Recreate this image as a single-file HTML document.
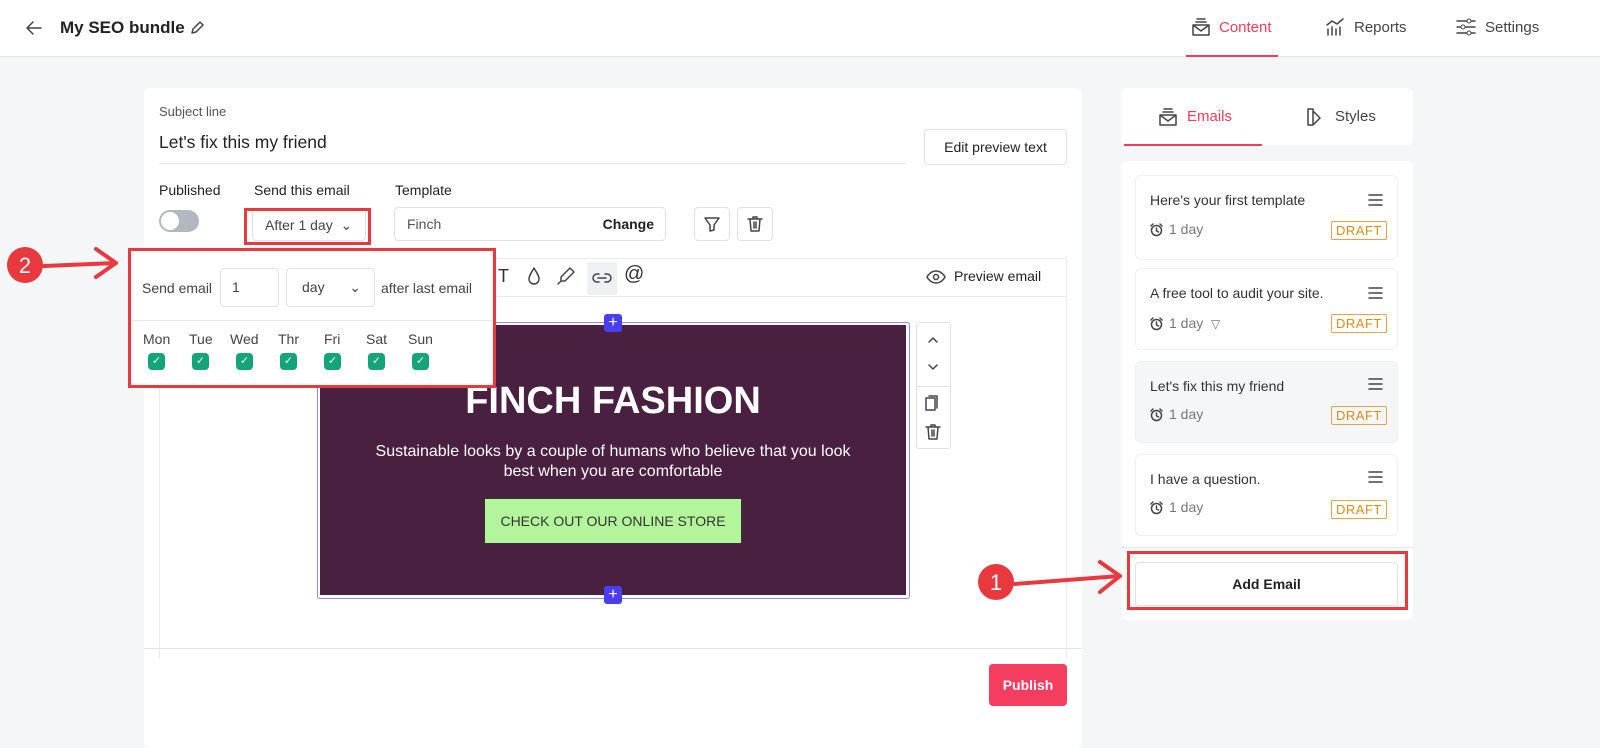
<!DOCTYPE html>
<html><head><meta charset="utf-8"><style>
*{box-sizing:border-box;margin:0;padding:0}
body{width:1600px;height:735px;overflow:hidden;background:#f5f6f8;font-family:"Liberation Sans",sans-serif;color:#222;position:relative}
.a{position:absolute}
.hdr{left:0;top:0;width:1600px;height:57px;background:#fff;border-bottom:1px solid #e3e5ea}
.btn{background:#fff;border:1px solid #dfe2e7;border-radius:4px}
.ic{stroke:#444;fill:none;stroke-width:1.5;stroke-linecap:round;stroke-linejoin:round}
.card{background:#fff;border:1px solid #eef0f3;border-radius:6px}
.draft{border:1px solid #e0a44a;color:#d48f1a;font-size:13px;padding:1px 4px;border-radius:2px;letter-spacing:.5px}
.chk{width:17px;height:17px;background:#13a47a;border-radius:4px;color:#fff;font-size:11px;text-align:center;line-height:17px}
.day{font-size:14px;color:#777;padding-left:19px}
.al{position:absolute;left:0;top:2px}
</style></head><body>
<div class="a hdr"></div>
<svg class="a" style="left:24px;top:19px" width="20" height="18"><path class="ic" stroke="#333" d="M17 9H3M9 3L3 9l6 6"/></svg>
<div class="a" style="left:60px;top:18px;font-size:17px;font-weight:bold;color:#222">My SEO bundle</div>
<svg class="a" style="left:189px;top:20px" width="16" height="16"><path class="ic" stroke="#999" d="M3 13l1-4 7-7 3 3-7 7z"/></svg>
<svg class="a" style="left:1191px;top:17px" width="20" height="20"><path class="ic" stroke="#f03d5c" d="M2 8h16v10H2zM2 8l8 6 8-6M5 5h10M6 2h8"/></svg>
<div class="a" style="left:1219px;top:19px;font-size:15px;color:#f03d5c">Content</div>
<div class="a" style="left:1186px;top:55px;width:92px;height:2px;background:#f03d5c"></div>
<svg class="a" style="left:1325px;top:17px" width="20" height="20"><path class="ic" d="M2 8l5-4 5 3 6-5M3 12v6M7 10v8M11 12v6M15 10v8"/></svg>
<div class="a" style="left:1354px;top:19px;font-size:15px;color:#444">Reports</div>
<svg class="a" style="left:1456px;top:17px" width="20" height="20"><path class="ic" d="M1 4h18M1 10h18M1 16h18"/><circle cx="13" cy="4" r="2" fill="#fff" stroke="#444"/><circle cx="7" cy="10" r="2" fill="#fff" stroke="#444"/><circle cx="13" cy="16" r="2" fill="#fff" stroke="#444"/></svg>
<div class="a" style="left:1485px;top:19px;font-size:15px;color:#444">Settings</div>

<div class="a" style="left:144px;top:88px;width:938px;height:660px;background:#fff;border-radius:6px"></div>
<div class="a" style="left:159px;top:104px;font-size:13px;color:#555">Subject line</div>
<div class="a" style="left:159px;top:132px;font-size:17.5px;color:#222">Let's fix this my friend</div>
<div class="a" style="left:159px;top:163px;width:747px;height:1px;background:#e3e5ea"></div>
<div class="a btn" style="left:924px;top:129px;width:143px;height:36px;font-size:14px;text-align:center;line-height:34px">Edit preview text</div>
<div class="a" style="left:159px;top:182px;font-size:14px">Published</div>
<div class="a" style="left:254px;top:182px;font-size:14px">Send this email</div>
<div class="a" style="left:395px;top:182px;font-size:14px">Template</div>
<div class="a" style="left:159px;top:210px;width:40px;height:22px;border-radius:11px;background:#b3b8c0"></div>
<div class="a" style="left:161px;top:212px;width:18px;height:18px;border-radius:9px;background:#fff"></div>
<div class="a btn" style="left:252px;top:209px;width:114px;height:32px;font-size:14px;line-height:30px;padding-left:12px;color:#444">After 1 day &nbsp;⌄</div>
<div class="a" style="left:244px;top:208px;width:127px;height:37px;border:3px solid #e8393e"></div>
<div class="a btn" style="left:394px;top:207px;width:272px;height:34px;font-size:14px;line-height:32px;padding-left:12px;color:#555">Finch<span style="position:absolute;right:11px;color:#222;font-weight:bold">Change</span></div>
<div class="a btn" style="left:694px;top:207px;width:36px;height:34px"></div>
<svg class="a" style="left:703px;top:215px" width="18" height="18"><path class="ic" d="M2 3h14l-5 7v5l-4 1v-6z"/></svg>
<div class="a btn" style="left:737px;top:207px;width:36px;height:34px"></div>
<svg class="a" style="left:746px;top:215px" width="18" height="18"><path class="ic" d="M2 4h14M7 4V2h4v2M4 4l1 12h8l1-12M8 7v6M10 7v6"/></svg>

<div class="a" style="left:159px;top:258px;width:908px;height:400px;border:1px solid #e8eaee;border-bottom:none"></div>
<div class="a" style="left:159px;top:296px;width:908px;height:1px;background:#e8eaee"></div>
<div class="a" style="left:498px;top:266px;font-size:18px;color:#333">T</div>
<svg class="a" style="left:525px;top:266px" width="18" height="20"><path class="ic" d="M9 2C6 7 4 10 4 13a5 5 0 0010 0c0-3-2-6-5-11z"/></svg>
<svg class="a" style="left:556px;top:266px" width="20" height="20"><path class="ic" d="M14 2l4 4-9 9-4 0 0-4zM5 15l-3 3"/></svg>
<div class="a" style="left:587px;top:262px;width:30px;height:33px;background:#eef0f3"></div>
<svg class="a" style="left:592px;top:268px" width="20" height="20"><path class="ic" d="M7 6H5a4 4 0 000 8h2M13 6h2a4 4 0 010 8h-2M6 10h8"/></svg>
<div class="a" style="left:624px;top:263px;font-size:20px;color:#333">@</div>
<svg class="a" style="left:926px;top:268px" width="20" height="18"><path class="ic" d="M1 9s3-6 9-6 9 6 9 6-3 6-9 6-9-6-9-6z"/><circle cx="10" cy="9" r="2.5" class="ic"/></svg>
<div class="a" style="left:954px;top:268px;font-size:14px;color:#222">Preview email</div>

<div class="a" style="left:317px;top:322px;width:593px;height:277px;border:1.5px solid #8f8af0;border-radius:3px"></div>
<div class="a" style="left:320px;top:325px;width:586px;height:270px;background:#4a2040"></div>
<div class="a" style="left:320px;top:380px;width:586px;text-align:center;color:#fff;font-size:38px;font-weight:bold">FINCH FASHION</div>
<div class="a" style="left:360px;top:442px;width:506px;text-align:center;color:#fff;font-size:16px;line-height:20px">Sustainable looks by a couple of humans who believe that you look best when you are comfortable</div>
<div class="a" style="left:484px;top:498px;width:258px;height:46px;background:#b3f59a;border:1px solid #333;text-align:center;line-height:44px;font-size:14px;color:#333">CHECK OUT OUR ONLINE STORE</div>
<div class="a" style="left:604px;top:314px;width:18px;height:18px;background:#4a3ff0;border-radius:3px;color:#fff;text-align:center;line-height:17px;font-size:16px">+</div>
<div class="a" style="left:604px;top:586px;width:18px;height:18px;background:#4a3ff0;border-radius:3px;color:#fff;text-align:center;line-height:17px;font-size:16px">+</div>
<div class="a" style="left:916px;top:322px;width:35px;height:127px;background:#fff;border:1px solid #dfe2e7;border-radius:3px"></div>
<div class="a" style="left:916px;top:386px;width:35px;height:1px;background:#dfe2e7"></div>
<svg class="a" style="left:926px;top:333px" width="14" height="60"><path class="ic" stroke="#bbb" d="M3 9l4-4 4 4"/><path class="ic" d="M3 32l4 4 4-4"/></svg>
<svg class="a" style="left:924px;top:392px" width="20" height="52"><path class="ic" d="M5 4h8v12M2 6h9v12H2z"/><path class="ic" d="M2 35h14M7 35v-2h4v2M4 35l1 12h8l1-12M8 38v6M10 38v6"/></svg>
<div class="a" style="left:144px;top:648px;width:938px;height:1px;background:#e3e5ea"></div>
<div class="a" style="left:989px;top:664px;width:78px;height:42px;background:#f53d5f;border-radius:4px;color:#fff;text-align:center;line-height:42px;font-size:14px;font-weight:bold">Publish</div>

<!-- popup -->
<div class="a" style="left:128px;top:248px;width:368px;height:140px;background:#fff;border:3px solid #e8393e"></div>
<div class="a" style="left:131px;top:320px;width:362px;height:1px;background:#e8eaee"></div>
<div class="a" style="left:142px;top:280px;font-size:14px;color:#444">Send email</div>
<div class="a btn" style="left:220px;top:268px;width:59px;height:39px;font-size:14px;line-height:37px;padding-left:11px;color:#444">1</div>
<div class="a btn" style="left:286px;top:268px;width:89px;height:39px;font-size:14px;line-height:37px;padding-left:15px;color:#444">day<span style="position:absolute;right:13px">⌄</span></div>
<div class="a" style="left:381px;top:280px;font-size:14px;color:#444">after last email</div>
<div class="a" style="left:143px;top:331px;font-size:14px;color:#444">Mon</div>
<div class="a" style="left:189px;top:331px;font-size:14px;color:#444">Tue</div>
<div class="a" style="left:230px;top:331px;font-size:14px;color:#444">Wed</div>
<div class="a" style="left:278px;top:331px;font-size:14px;color:#444">Thr</div>
<div class="a" style="left:324px;top:331px;font-size:14px;color:#444">Fri</div>
<div class="a" style="left:366px;top:331px;font-size:14px;color:#444">Sat</div>
<div class="a" style="left:408px;top:331px;font-size:14px;color:#444">Sun</div>
<div class="a chk" style="left:148px;top:353px">✓</div>
<div class="a chk" style="left:192px;top:353px">✓</div>
<div class="a chk" style="left:236px;top:353px">✓</div>
<div class="a chk" style="left:280px;top:353px">✓</div>
<div class="a chk" style="left:324px;top:353px">✓</div>
<div class="a chk" style="left:368px;top:353px">✓</div>
<div class="a chk" style="left:412px;top:353px">✓</div>

<!-- right panel -->
<div class="a" style="left:1121px;top:88px;width:292px;height:57px;background:#fff;border-radius:6px"></div>
<svg class="a" style="left:1158px;top:107px" width="20" height="20"><path class="ic" stroke="#f03d5c" d="M2 8h16v10H2zM2 8l8 6 8-6M5 5h10M6 2h8"/></svg>
<div class="a" style="left:1187px;top:108px;font-size:15px;color:#f03d5c">Emails</div>
<div class="a" style="left:1124px;top:144px;width:138px;height:2px;background:#f03d5c"></div>
<svg class="a" style="left:1306px;top:107px" width="22" height="20"><path class="ic" d="M2 2h5v16H2zM7 4l7 7-7 7"/></svg>
<div class="a" style="left:1335px;top:108px;font-size:15px;color:#444">Styles</div>
<div class="a" style="left:1121px;top:161px;width:292px;height:459px;background:#fff;border-radius:6px"></div>

<div class="a card" style="left:1135px;top:175px;width:263px;height:85px"></div>
<div class="a card" style="left:1135px;top:268px;width:263px;height:82px"></div>
<div class="a card" style="left:1135px;top:361px;width:263px;height:82px;background:#f5f6f8"></div>
<div class="a card" style="left:1135px;top:454px;width:263px;height:82px"></div>

<div class="a" style="left:1150px;top:192px;font-size:14px;color:#333">Here's your first template</div>
<div class="a" style="left:1150px;top:285px;font-size:14px;color:#333">A free tool to audit your site.</div>
<div class="a" style="left:1150px;top:378px;font-size:14px;color:#333">Let's fix this my friend</div>
<div class="a" style="left:1150px;top:471px;font-size:14px;color:#333">I have a question.</div>
<div class="a day" style="left:1150px;top:221px"><svg class="al" width="13" height="14"><circle cx="6.5" cy="7.5" r="5" class="ic" stroke="#999" stroke-width="1.2"/><path class="ic" stroke="#999" stroke-width="1.2" d="M6.5 5v3l2 1M1 3l2-2M12 3l-2-2"/></svg>1 day</div>
<div class="a day" style="left:1150px;top:315px"><svg class="al" width="13" height="14"><circle cx="6.5" cy="7.5" r="5" class="ic" stroke="#999" stroke-width="1.2"/><path class="ic" stroke="#999" stroke-width="1.2" d="M6.5 5v3l2 1M1 3l2-2M12 3l-2-2"/></svg>1 day &nbsp;<span style="font-size:12px">▽</span></div>
<div class="a day" style="left:1150px;top:406px"><svg class="al" width="13" height="14"><circle cx="6.5" cy="7.5" r="5" class="ic" stroke="#999" stroke-width="1.2"/><path class="ic" stroke="#999" stroke-width="1.2" d="M6.5 5v3l2 1M1 3l2-2M12 3l-2-2"/></svg>1 day</div>
<div class="a day" style="left:1150px;top:499px"><svg class="al" width="13" height="14"><circle cx="6.5" cy="7.5" r="5" class="ic" stroke="#999" stroke-width="1.2"/><path class="ic" stroke="#999" stroke-width="1.2" d="M6.5 5v3l2 1M1 3l2-2M12 3l-2-2"/></svg>1 day</div>
<div class="a draft" style="left:1331px;top:221px">DRAFT</div>
<div class="a draft" style="left:1331px;top:314px">DRAFT</div>
<div class="a draft" style="left:1331px;top:406px">DRAFT</div>
<div class="a draft" style="left:1331px;top:500px">DRAFT</div>
<svg class="a" style="left:1368px;top:193px" width="15" height="320"><path class="ic" stroke="#333" d="M1 2h13M1 7h13M1 12h13M1 95h13M1 100h13M1 105h13M1 186h13M1 191h13M1 196h13M1 279h13M1 284h13M1 289h13"/></svg>
<div class="a" style="left:1121px;top:547px;width:292px;height:1px;background:#e3e5ea"></div>
<div class="a btn" style="left:1135px;top:562px;width:263px;height:44px;text-align:center;line-height:42px;font-size:14px;font-weight:bold;color:#222">Add Email</div>
<div class="a" style="left:1127px;top:551px;width:281px;height:59px;border:3px solid #e8393e"></div>

<!-- annotations -->
<svg class="a" style="left:0;top:0" width="1600" height="735">
<circle cx="25" cy="265" r="18" fill="#e8393e"/>
<path d="M44 266L116 263M96 249l20 14-20 14" stroke="#e8393e" stroke-width="4" fill="none" stroke-linecap="round" stroke-linejoin="round"/>
<circle cx="996" cy="582" r="18" fill="#e8393e"/>
<path d="M1015 584L1120 576M1100 562l20 14-20 16" stroke="#e8393e" stroke-width="4" fill="none" stroke-linecap="round" stroke-linejoin="round"/>
<text x="25" y="273" fill="#fff" font-size="22" text-anchor="middle" font-family="Liberation Sans">2</text>
<text x="996" y="590" fill="#fff" font-size="22" text-anchor="middle" font-family="Liberation Sans">1</text>
</svg>
</body></html>
